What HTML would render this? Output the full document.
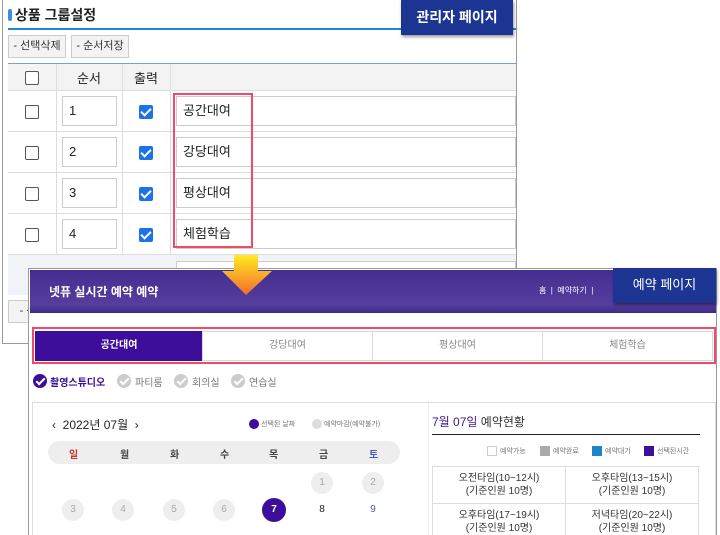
<!DOCTYPE html><html><head><meta charset="utf-8"><style>
*{margin:0;padding:0;box-sizing:border-box}
html,body{width:720px;height:535px;overflow:hidden}
body{background:#fff;position:relative;font-family:"Liberation Sans","Noto Sans CJK KR",sans-serif;color:#222}
.a{position:absolute}
.cb{position:absolute;width:14px;height:14px;border:1px solid #555;border-radius:2px;background:#fff}
.ck{position:absolute;width:14px;height:14px;border-radius:2px;background:#1a73e8}
.ck:after{content:"";position:absolute;left:4px;top:1px;width:4px;height:8px;border:solid #fff;border-width:0 2px 2px 0;transform:rotate(45deg)}
.inp{position:absolute;border:1px solid #ccc;background:#fff;font-size:13px;padding-left:6px;line-height:28px}
.hl{position:absolute;height:1px;background:#ddd}
.vl{position:absolute;width:1px;background:#ddd}
.btn{position:absolute;border:1px solid #ccc;background:#f3f3f3;font-size:11px;color:#333;text-align:center;line-height:21px}
.lab{position:absolute;background:#1c3592;color:#fff;font-weight:bold;text-align:center;box-shadow:1px 2px 3px rgba(0,0,0,.4)}
.tab{position:absolute;top:331px;height:30px;background:#fff;border:1px solid #d8d8e0;font-size:10px;color:#888;text-align:center;line-height:28px}
.rd{position:absolute;top:374px;width:14px;height:14px;border-radius:50%;background:#ccc}
.rd:after{content:"";position:absolute;left:5px;top:2px;width:3px;height:7px;border:solid #fff;border-width:0 2px 2px 0;transform:rotate(45deg)}
.dt{position:absolute;width:22px;height:22px;border-radius:50%;font-size:10px;text-align:center;line-height:22px;color:#aaa;background:#eee}
.wd{position:absolute;top:446px;font-size:10px;font-weight:bold;color:#444}
.cell{position:absolute;width:134px;height:38px;border:1px solid #ddd;text-align:center;font-size:10px;color:#333;padding-top:5px;line-height:13px}
</style></head><body>
<div class="a" style="left:2px;top:0;width:515px;height:344px;border:1px solid #999;border-top:none"></div>
<div class="a" style="left:8px;top:9px;width:4px;height:12px;background:#3a8ee6;border-radius:2px"></div>
<div class="a" style="left:15px;top:5px;font-size:14px;font-weight:bold">상품 그룹설정</div>
<div class="a" style="left:8px;top:28px;width:508px;height:2px;background:#1e88d6"></div>
<div class="btn" style="left:8px;top:35px;width:58px;height:23px">- 선택삭제</div>
<div class="btn" style="left:71px;top:35px;width:58px;height:23px">- 순서저장</div>
<div class="a" style="left:8px;top:63px;width:508px;height:1px;background:#6fa6d8"></div>
<div class="a" style="left:8px;top:64px;width:508px;height:26px;background:#f3f3f3"></div>
<div class="cb" style="left:25px;top:71px"></div>
<div class="a" style="left:77px;top:68px;font-size:13px">순서</div>
<div class="a" style="left:134px;top:68px;font-size:13px">출력</div>
<div class="vl" style="left:56px;top:64px;height:190px"></div>
<div class="vl" style="left:122px;top:64px;height:190px"></div>
<div class="vl" style="left:170px;top:64px;height:280px"></div>
<div class="hl" style="left:8px;top:90px;width:508px"></div>
<div class="hl" style="left:8px;top:131px;width:508px"></div>
<div class="hl" style="left:8px;top:172px;width:508px"></div>
<div class="hl" style="left:8px;top:213px;width:508px"></div>
<div class="hl" style="left:8px;top:254px;width:508px"></div>
<div class="a" style="left:8px;top:255px;width:508px;height:40px;background:#f0f4f9"></div>
<div class="inp" style="left:176px;top:261px;width:340px;height:30px"></div>
<div class="btn" style="left:8px;top:300px;width:40px;height:23px">- 선</div>
<div class="cb" style="left:25px;top:105px"></div><div class="inp" style="left:62px;top:96px;width:55px;height:30px">1</div><div class="ck" style="left:139px;top:105px"></div><div class="inp" style="left:176px;top:96px;width:340px;height:30px">공간대여</div>
<div class="cb" style="left:25px;top:146px"></div><div class="inp" style="left:62px;top:137px;width:55px;height:30px">2</div><div class="ck" style="left:139px;top:146px"></div><div class="inp" style="left:176px;top:137px;width:340px;height:30px">강당대여</div>
<div class="cb" style="left:25px;top:187px"></div><div class="inp" style="left:62px;top:178px;width:55px;height:30px">3</div><div class="ck" style="left:139px;top:187px"></div><div class="inp" style="left:176px;top:178px;width:340px;height:30px">평상대여</div>
<div class="cb" style="left:25px;top:228px"></div><div class="inp" style="left:62px;top:219px;width:55px;height:30px">4</div><div class="ck" style="left:139px;top:228px"></div><div class="inp" style="left:176px;top:219px;width:340px;height:30px">체험학습</div>
<div class="a" style="left:173px;top:93px;width:80px;height:155px;border:2px solid #f04a64"></div>
<div class="lab" style="left:401px;top:0;width:112px;height:35px;font-size:14px;line-height:34px">관리자 페이지</div>

<div class="a" style="left:28px;top:268px;width:689px;height:270px;border:1px solid #999;background:#fff"></div>
<div class="a" style="left:30px;top:270px;width:686px;height:43px;background:linear-gradient(#432e90,#563d9e 80%,#3e2a88)"></div>
<div class="a" style="left:49px;top:283px;font-size:12px;font-weight:bold;color:#fff">넷퓨 실시간 예약 예약</div>
<div class="a" style="left:539px;top:285px;font-size:8px;color:#fff">홈 &nbsp;|&nbsp; 예약하기 &nbsp;|</div>
<svg class="a" style="left:220px;top:255px" width="54" height="42"><defs><linearGradient id="g" x1="0" y1="0" x2="0" y2="1"><stop offset="0" stop-color="#ffec20"/><stop offset="1" stop-color="#f36a30"/></linearGradient></defs><path d="M14 0H38V16H52L26 40L2 16H14Z" fill="url(#g)"/></svg>
<div class="lab" style="left:613px;top:268px;width:103px;height:35px;font-size:13px;line-height:34px;font-weight:normal">예약 페이지</div>
<div class="a" style="left:32px;top:327px;width:684px;height:37px;border:2px solid #f04a64"></div>
<div class="tab" style="left:35px;width:168px;background:#3d0e9a;border-color:#3d0e9a;color:#fff;font-weight:bold">공간대여</div>
<div class="tab" style="left:202px;width:171px">강당대여</div>
<div class="tab" style="left:372px;width:171px">평상대여</div>
<div class="tab" style="left:542px;width:171px">체험학습</div>
<div class="rd" style="left:33px;background:#3d0e9a"></div><div class="a" style="left:50px;top:374px;font-size:10px;font-weight:bold;color:#3d0e9a">촬영스튜디오</div>
<div class="rd" style="left:117px"></div><div class="a" style="left:135px;top:374px;font-size:10px;color:#777">파티룸</div>
<div class="rd" style="left:174px"></div><div class="a" style="left:192px;top:374px;font-size:10px;color:#777">회의실</div>
<div class="rd" style="left:231px"></div><div class="a" style="left:249px;top:374px;font-size:10px;color:#777">연습실</div>
<div class="a" style="left:32px;top:402px;width:684px;height:140px;border:1px solid #ddd"></div>
<div class="vl" style="left:428px;top:403px;height:132px;background:#eee"></div>
<div class="a" style="left:52px;top:416px;font-size:12px;color:#222">‹ &nbsp;2022년 07월 &nbsp;›</div>
<div class="a" style="left:249px;top:419px;width:10px;height:10px;border-radius:50%;background:#3d0e9a"></div><div class="a" style="left:261px;top:419px;font-size:7px;color:#777">선택된 날짜</div>
<div class="a" style="left:312px;top:419px;width:10px;height:10px;border-radius:50%;background:#ddd"></div><div class="a" style="left:324px;top:419px;font-size:7px;color:#777">예약마감(예약불가)</div>
<div class="a" style="left:48px;top:441px;width:352px;height:23px;border-radius:12px;background:#eee"></div>
<div class="wd" style="left:69px;color:#c0392b">일</div><div class="wd" style="left:120px">월</div><div class="wd" style="left:170px">화</div><div class="wd" style="left:220px">수</div><div class="wd" style="left:269px">목</div><div class="wd" style="left:319px">금</div><div class="wd" style="left:369px;color:#4a5bb0">토</div>
<div class="dt" style="left:311px;top:472px">1</div><div class="dt" style="left:362px;top:472px">2</div>
<div class="dt" style="left:62px;top:499px">3</div><div class="dt" style="left:112px;top:499px">4</div><div class="dt" style="left:163px;top:499px">5</div><div class="dt" style="left:213px;top:499px">6</div>
<div class="dt" style="left:262px;top:498px;width:24px;height:24px;line-height:24px;background:#3d0e9a;color:#fff;font-weight:bold">7</div>
<div class="dt" style="left:311px;top:499px;background:none;color:#222">8</div><div class="dt" style="left:362px;top:499px;background:none;color:#4a5bb0">9</div>
<div class="a" style="left:432px;top:413px;font-size:12px;color:#3d1a8a">7월 07일 <span style="color:#333">예약현황</span></div>
<div class="a" style="left:432px;top:434px;width:268px;height:1px;background:#222"></div>
<div class="a" style="left:487px;top:446px;width:10px;height:10px;border:1px solid #ccc"></div><div class="a" style="left:500px;top:446px;font-size:7px;color:#777">예약가능</div>
<div class="a" style="left:540px;top:446px;width:10px;height:10px;background:#aaa"></div><div class="a" style="left:553px;top:446px;font-size:7px;color:#777">예약완료</div>
<div class="a" style="left:592px;top:446px;width:10px;height:10px;background:#1a86c8"></div><div class="a" style="left:605px;top:446px;font-size:7px;color:#777">예약대기</div>
<div class="a" style="left:644px;top:446px;width:10px;height:10px;background:#3d0e9a"></div><div class="a" style="left:657px;top:446px;font-size:7px;color:#777">선택된시간</div>
<div class="cell" style="left:432px;top:466px">오전타임(10~12시)<br>(기준인원 10명)</div>
<div class="cell" style="left:565px;top:466px">오후타임(13~15시)<br>(기준인원 10명)</div>
<div class="cell" style="left:432px;top:503px">오후타임(17~19시)<br>(기준인원 10명)</div>
<div class="cell" style="left:565px;top:503px">저녁타임(20~22시)<br>(기준인원 10명)</div>
</body></html>
